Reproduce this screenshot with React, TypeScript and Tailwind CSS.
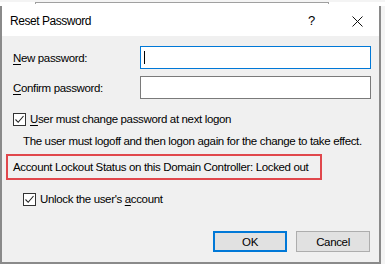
import React from 'react';

const font = { fontFamily: '"Liberation Sans", Arial, sans-serif' };

function CheckBox() {
  return (
    <span className="flex h-[13px] w-[13px] shrink-0 items-center justify-center border border-[#333] bg-white">
      <svg width="11" height="11" viewBox="0 0 11 11" fill="none">
        <path d="M1.5 5.5 L4.2 8.3 L9.5 2" stroke="#222" strokeWidth="1.1" />
      </svg>
    </span>
  );
}

function Field(props: { hot: string; rest: string; focused?: boolean }) {
  const { hot, rest, focused } = props;
  return (
    <div className="flex h-[23px] items-center">
      <span className="w-[138px] pl-[11px] leading-[14px]">
        <span className="underline underline-offset-2">{hot}</span>
        {rest}
      </span>
      <div
        className={`flex h-[23px] w-[231px] items-center bg-white pl-[3px] ${
          focused ? 'border border-[#0078d7]' : 'border border-[#7a7a7a]'
        }`}
      >
        {focused && <span className="h-[13px] w-px bg-black" />}
      </div>
    </div>
  );
}

export default function App() {
  return (
    <div
      className="h-[264px] w-[385px] overflow-hidden whitespace-nowrap bg-[#f4f4f4] text-[11.5px] leading-[14px] tracking-[-0.35px] text-black"
      style={font}
    >
      <div className="h-[4px] w-full bg-white pl-[35px]">
        <div className="mt-[2px] h-[2px] w-[294px] border-t border-l border-r border-[#a0a0a0]" />
      </div>
      <div className="flex h-[258px] w-[381px] flex-col border-x-2 border-b-2 border-[#8a8a8a]">
        <div className="flex h-[30px] shrink-0 items-center bg-white pl-[8px]">
          <span className="text-[12px] tracking-[-0.45px]">Reset Password</span>
          <span className="ml-auto mr-[37px] text-[13px]">?</span>
          <svg className="mr-[16px]" width="11" height="11" viewBox="0 0 11 11">
            <path d="M0.5 0.5 L10.5 10.5 M10.5 0.5 L0.5 10.5" stroke="#111" strokeWidth="1" />
          </svg>
        </div>
        <div className="flex flex-1 flex-col bg-[#f0f0f0]">
          <div className="mt-[10px] flex flex-col gap-[7px]">
            <Field hot="N" rest="ew password:" focused />
            <Field hot="C" rest="onfirm password:" />
          </div>
          <div className="mt-[14px] flex h-[13px] items-start gap-[4px] pl-[11px]">
            <CheckBox />
            <span className="-mt-[1px]">
              <span className="underline underline-offset-2">U</span>ser must change password at next logon
            </span>
          </div>
          <div className="mt-[8px] pl-[21px]">The user must logoff and then logon again for the change to take effect.</div>
          <div className="mt-[6px] ml-[4px] flex h-[26px] w-[316px] items-center border-2 border-[#e0474c] pl-[5px]">
            Account Lockout Status on this Domain Controller: Locked out
          </div>
          <div className="mt-[13px] flex h-[13px] items-start gap-[4px] pl-[21px]">
            <CheckBox />
            <span className="-mt-[1px]">
              Unlock the user's <span className="underline underline-offset-2">a</span>ccount
            </span>
          </div>
          <div className="mt-auto mb-[10px] flex justify-end gap-[9px] pr-[9px]">
            <button className="h-[21px] w-[74px] border-2 border-[#0078d7] bg-[#e1e1e1]">OK</button>
            <button className="h-[21px] w-[74px] border border-[#adadad] bg-[#e1e1e1]">Cancel</button>
          </div>
        </div>
      </div>
    </div>
  );
}
